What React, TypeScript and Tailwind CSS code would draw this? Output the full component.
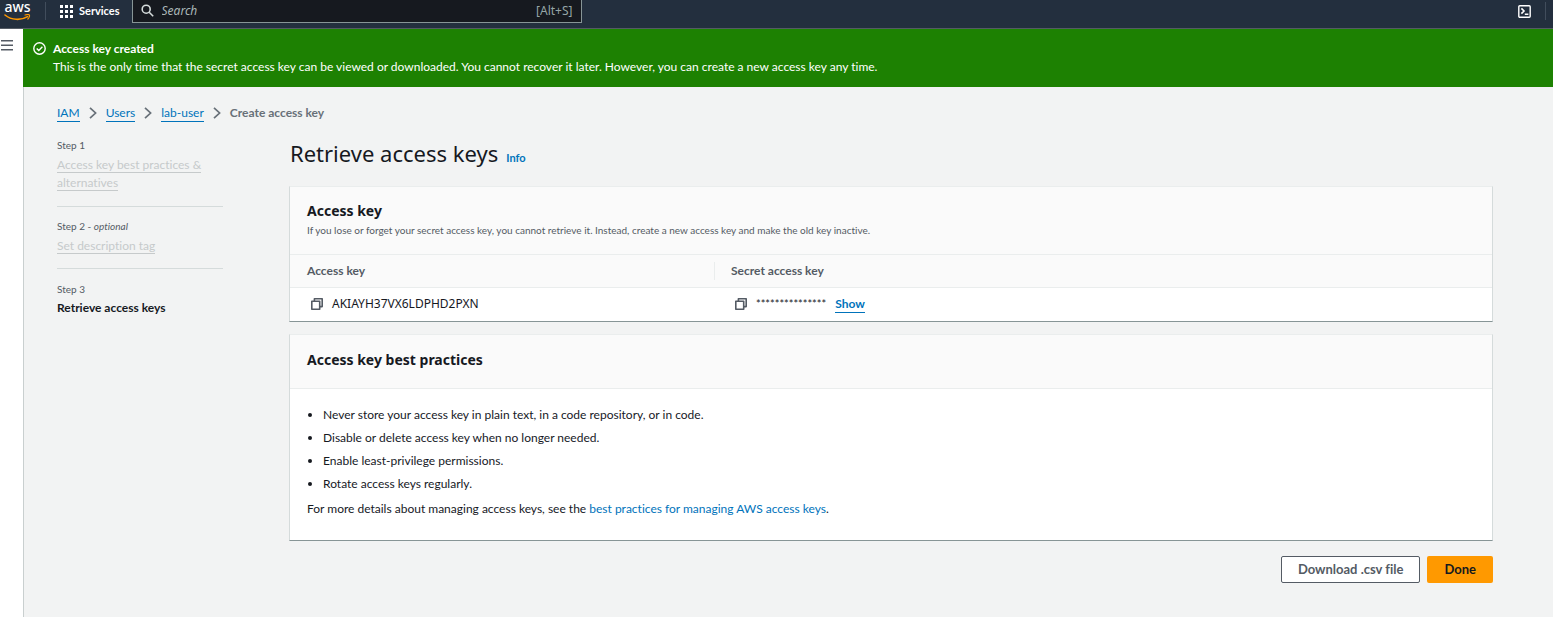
import React from "react";

const link = "border-b border-[#0073bb] leading-4 text-[#0073bb]";

function AwsLogo() {
  return (
    <a href="#home" aria-label="AWS home" className="flex w-[27px] flex-col items-center text-white">
      <span className="h-3 font-['Noto_Sans',sans-serif] text-[14px] leading-[10px] font-medium">aws</span>
      <svg width="27" height="8" viewBox="0 0 27 8" fill="none" aria-hidden="true">
        <path d="M1 1C7.5 6.4 17 6.6 23.6 2.6" stroke="#ff9900" strokeWidth="1.6" strokeLinecap="round" />
        <path d="M21 1C22.9 .5 25 .5 25.4 1.1C25.8 1.8 25.1 3.9 23.9 5" stroke="#ff9900" strokeWidth="1.2" strokeLinecap="round" />
      </svg>
    </a>
  );
}

function TopBar() {
  return (
    <header className="flex h-[29px] items-start border-b border-[#545b64] bg-[#232f3e] text-white">
      <div className="flex h-[22px] flex-1 items-center">
        <div className="flex h-[22px] items-start pt-[2px] pl-1">
          <AwsLogo />
        </div>
        <span className="ml-[14px] h-[18px] w-px bg-[#414d5c]" />
        <button type="button" className="ml-[14px] flex items-center gap-[6px] text-[11px] leading-4 font-bold">
          <svg width="13" height="13" viewBox="0 0 13 13" fill="#fff" aria-hidden="true">
            {[0, 5, 10].map((y) => [0, 5, 10].map((x) => <rect key={`${x}-${y}`} x={x} y={y} width="3" height="3" />))}
          </svg>
          Services
        </button>
        <label className="ml-3 flex h-[23px] w-[450px] items-center border border-t-0 border-[#879596] bg-[#16191f] px-2">
          <svg width="13" height="13" viewBox="0 0 13 13" fill="none" stroke="#d5dbdb" strokeWidth="1.6" aria-hidden="true">
            <circle cx="5.2" cy="5.2" r="4" />
            <path d="M8.2 8.2L12.2 12.2" />
          </svg>
          <input
            type="text"
            aria-label="Search"
            placeholder="Search"
            className="ml-2 min-w-0 flex-1 bg-transparent font-['Noto_Sans',sans-serif] text-[12px] leading-4 outline-none placeholder:text-[#aab7b8] placeholder:italic"
          />
          <span className="font-['Noto_Sans',sans-serif] text-[12px] leading-4 text-[#95a5a6]">[Alt+S]</span>
        </label>
      </div>
      <div className="flex h-[22px] items-center gap-[14px] pr-[7px]">
        <button type="button" aria-label="CloudShell">
          <svg width="13" height="13" viewBox="0 0 13 13" fill="none" stroke="#fff" strokeWidth="1.4" aria-hidden="true">
            <rect x="0.8" y="0.8" width="11.4" height="11.4" rx="1" />
            <path d="M3.4 3.4L6 6L3.4 8.6M6.8 9.3H10.4" strokeWidth="1.6" />
          </svg>
        </button>
        <span className="h-[18px] w-px bg-[#414d5c]" />
      </div>
    </header>
  );
}

function CopyButton({ label }: { label: string }) {
  return (
    <button type="button" aria-label={label} className="ml-1">
      <svg width="12" height="12" viewBox="0 0 12 12" fill="none" stroke="#545b64" strokeWidth="1.6" strokeLinejoin="round" aria-hidden="true">
        <rect x="0.8" y="3.3" width="7.9" height="7.9" />
        <path d="M3.4 3V0.8H11.2V8.6H9" />
      </svg>
    </button>
  );
}

function Chevron() {
  return (
    <svg width="8" height="12" viewBox="0 0 8 12" fill="none" stroke="#687078" strokeWidth="1.7" aria-hidden="true">
      <path d="M1 0.8L6.6 6L1 11.2" />
    </svg>
  );
}

function Steps() {
  return (
    <ol className="w-[166px] shrink-0 pt-[14px] text-[12px] leading-[18px]">
      <li className="border-b border-[#d5dbdb] pb-[14px]">
        <p className="text-[10px] leading-[18px] text-[#545b64]">Step 1</p>
        <p className="pt-[2px] text-[#c6cacb]">
          <span className="border-b border-[#c6cacb]">Access key best practices &amp; alternatives</span>
        </p>
      </li>
      <li className="border-b border-[#d5dbdb] pt-[10px] pb-[13px]">
        <p className="text-[10px] leading-[18px] text-[#545b64]">
          Step 2 - <em>optional</em>
        </p>
        <p className="pt-[2px] text-[#c6cacb]">
          <span className="border-b border-[#c6cacb]">Set description tag</span>
        </p>
      </li>
      <li className="pt-[11px]">
        <p className="text-[10px] leading-[18px] text-[#545b64]">Step 3</p>
        <p className="pt-px font-bold">Retrieve access keys</p>
      </li>
    </ol>
  );
}

const card = "border border-t-[#eaeded] border-r-[#d5dbdb] border-b-[#879596] border-l-[#d5dbdb] bg-white";
const heading = "font-['Noto_Sans',sans-serif] text-[14px] leading-[22px] font-bold";

const practices = [
  "Never store your access key in plain text, in a code repository, or in code.",
  "Disable or delete access key when no longer needed.",
  "Enable least-privilege permissions.",
  "Rotate access keys regularly.",
];

export default function App() {
  return (
    <div className="flex min-h-screen flex-col bg-[#f2f3f3] font-[Lato,sans-serif] text-[12px] leading-[18px] text-[#16191f] [font-variant-ligatures:none]">
      <TopBar />
      <div className="flex flex-1">
        <nav className="w-[23px] shrink-0 bg-white pt-[11px]">
          <button type="button" aria-label="Open navigation" className="block">
            <svg width="13" height="11" viewBox="0 0 13 11" fill="#545b64" aria-hidden="true">
              <path d="M1 0h12v1.5H1zM1 4.5h12V6H1zM1 9h12v1.5H1z" />
            </svg>
          </button>
        </nav>
        <div className="flex min-w-0 flex-1 flex-col">
          <div role="status" className="flex gap-[7px] bg-[#1d8102] py-[11px] pl-[10px] text-white">
            <svg className="mt-[2px]" width="13" height="13" viewBox="0 0 13 13" fill="none" stroke="#fff" strokeWidth="1.4" aria-hidden="true">
              <circle cx="6.5" cy="6.5" r="5.7" />
              <path d="M3.7 6.4L5.8 8.5L9.4 4.8" />
            </svg>
            <div>
              <p className="font-bold">Access key created</p>
              <p>
                This is the only time that the secret access key can be viewed or downloaded. You cannot recover it later. However, you can
                create a new access key any time.
              </p>
            </div>
          </div>
          <main className="flex-1 border-l border-[#c9cfcf] pr-[60px] pb-8 pl-[33px]">
            <nav aria-label="Breadcrumb" className="flex items-center gap-[9px] pt-[17px]">
              <a href="#iam" className={link}>IAM</a>
              <Chevron />
              <a href="#users" className={link}>Users</a>
              <Chevron />
              <a href="#lab-user" className={link}>lab-user</a>
              <Chevron />
              <span className="font-bold text-[#687078]">Create access key</span>
            </nav>
            <div className="flex items-start gap-[66px]">
              <Steps />
              <div className="min-w-0 flex-1 pt-[17px]">
                <div className="flex items-baseline gap-2 pl-px">
                  <h1 className="font-['Noto_Sans',sans-serif] text-[22px] leading-7">Retrieve access keys</h1>
                  <a href="#info" className="text-[11px] font-bold text-[#0073bb]">Info</a>
                </div>

                <section className={`mt-[19px] ${card}`}>
                  <div className="border-b border-[#eaeded] bg-[#fafafa] px-[17px] pt-[13px] pb-4">
                    <h2 className={heading}>Access key</h2>
                    <p className="text-[10px] leading-4 text-[#545b64]">
                      If you lose or forget your secret access key, you cannot retrieve it. Instead, create a new access key and make the old
                      key inactive.
                    </p>
                  </div>
                  <table className="w-full table-fixed border-collapse text-left">
                    <thead className="bg-[#fafafa] text-[#545b64]">
                      <tr className="h-8 border-b border-[#eaeded]">
                        <th className="w-[425px] p-0 font-bold">
                          <span className="block border-r border-[#eaeded] pl-[17px]">Access key</span>
                        </th>
                        <th className="p-0 pl-4 font-bold">Secret access key</th>
                      </tr>
                    </thead>
                    <tbody>
                      <tr className="h-[34px]">
                        <td className="p-0 pl-[17px]">
                          <div className="flex items-center gap-[9px]">
                            <CopyButton label="Copy access key" />
                            <span className="font-['Noto_Sans',sans-serif]">AKIAYH37VX6LDPHD2PXN</span>
                          </div>
                        </td>
                        <td className="p-0 pl-4">
                          <div className="flex items-center gap-[9px]">
                            <CopyButton label="Copy secret access key" />
                            <span className="text-[11px]">***************</span>
                            <button type="button" className="border-b border-[#0073bb] leading-4 font-bold text-[#0073bb]">
                              Show
                            </button>
                          </div>
                        </td>
                      </tr>
                    </tbody>
                  </table>
                </section>

                <section className={`mt-3 ${card}`}>
                  <h2 className={`border-b border-[#eaeded] bg-[#fafafa] px-[17px] pt-[14px] pb-[17px] ${heading}`}>
                    Access key best practices
                  </h2>
                  <div className="px-[17px] pt-[14px] pb-[22px]">
                    <ul className="list-disc pl-4 leading-[23px]">
                      {practices.map((p) => (
                        <li key={p}>{p}</li>
                      ))}
                    </ul>
                    <p className="pt-[5px]">
                      For more details about managing access keys, see the{" "}
                      <a href="#best-practices" className="text-[#0073bb]">best practices for managing AWS access keys</a>.
                    </p>
                  </div>
                </section>

                <div className="mt-[15px] flex justify-end gap-[7px] text-[13px] leading-4 font-bold">
                  <button type="button" className="h-[27px] rounded-[2px] border border-[#545b64] bg-white px-4 pb-[2px] text-[#545b64]">
                    Download .csv file
                  </button>
                  <button type="button" className="h-[27px] rounded-[2px] bg-[#ff9900] px-[17px] pb-[2px] text-[#16191f]">
                    Done
                  </button>
                </div>
              </div>
            </div>
          </main>
        </div>
      </div>
    </div>
  );
}
